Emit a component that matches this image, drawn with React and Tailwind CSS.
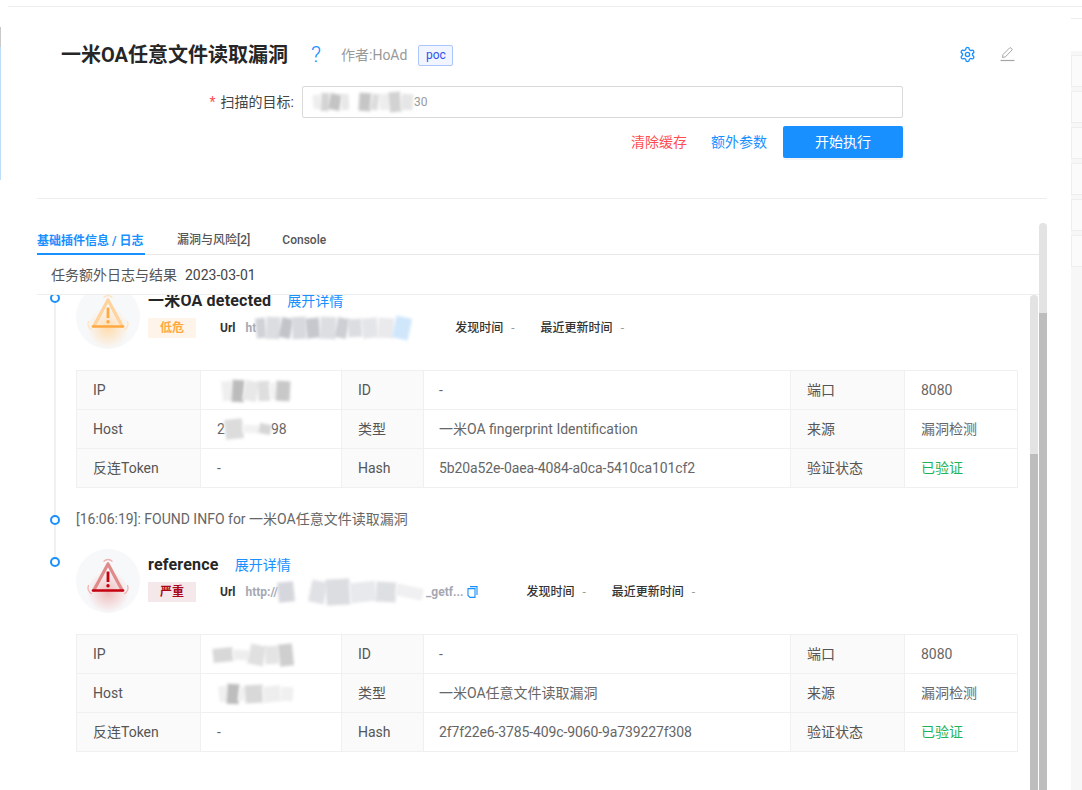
import React from "react";
import { Settings } from "lucide-react";

const riskStyles = {
  low: { main: "#ffa940", side: "#ffd39b", glow: "#ffdcae", arc: "#ffe2bf" },
  critical: { main: "#c4000f", side: "#e08a8a", glow: "#f0bcbc", arc: "#eeb0ac" },
};

const tilts = ["-rotate-6", "rotate-3", "rotate-12", "-rotate-3"];

function RiskIcon({ id, level }) {
  const c = riskStyles[level];
  return (
    <svg width="64" height="64" viewBox="0 0 64 64" className="shrink-0">
      <defs>
        <radialGradient id={id} cx="32" cy="43" r="21" gradientUnits="userSpaceOnUse">
          <stop offset="0" stopColor={c.glow} />
          <stop offset="1" stopColor={c.glow} stopOpacity="0" />
        </radialGradient>
      </defs>
      <circle cx="32" cy="32" r="32" fill="#f7f8fa" />
      <circle cx="32" cy="32" r="32" fill={`url(#${id})`} />
      <path d="M27.5 12.5 Q32 8.5 36.5 12.5" fill="none" stroke={c.arc} strokeWidth="1.2" />
      <path d="M12.5 36 Q10.5 42 16 45" fill="none" stroke={c.arc} strokeWidth="1.2" />
      <path d="M51.5 36 Q53.5 42 48 45" fill="none" stroke={c.arc} strokeWidth="1.2" />
      <path d="M32 15 L18 41 M32 15 L46 41" stroke={c.side} strokeWidth="3.2" strokeLinecap="round" />
      <path d="M17 41.5 H47" stroke={c.main} strokeWidth="2.6" strokeLinecap="round" />
      <path d="M32 22.5 V33" stroke={c.main} strokeWidth="2.8" />
      <circle cx="32" cy="36.8" r="1.7" fill={c.main} />
    </svg>
  );
}

function EditIcon() {
  return (
    <svg width="15" height="16" viewBox="0 0 15 16" fill="none" stroke="#a6a6a6" strokeWidth="1">
      <path d="M2.5 11.5 L3 8.5 L10 1.5 L12.5 3.5 L5.5 10.8 Z" />
      <path d="M0.5 14.5 H14.5" strokeWidth="1.2" />
    </svg>
  );
}

function CopyIcon() {
  return (
    <svg width="11" height="12" viewBox="0 0 11 12" fill="none" stroke="#1890ff" strokeWidth="1.1" className="shrink-0">
      <path d="M3 .6 H10 V9" />
      <path d="M1 2.6 H8 V11.4 H3 L1 9.4 Z" />
    </svg>
  );
}

// gray blobs standing in for the redacted parts of the screenshot
function Smudge({ blocks, className = "" }) {
  return (
    <span className={`inline-flex items-center align-middle ${className}`}>
      {blocks.map((b, i) => (
        <span key={i} className={`block shrink-0 blur-[1.5px] ${tilts[i % 4]} ${b}`} />
      ))}
    </span>
  );
}

function Scrollbar({ thumbClass, className = "" }) {
  return (
    <div className={`w-2 shrink-0 flex flex-col ${className}`}>
      <div className={`rounded-t bg-[#e3e3e3] ${thumbClass}`} />
      <div className="flex-1 bg-[#bdbdbd]" />
    </div>
  );
}

function Cell({ label, children, className = "" }) {
  const base = "border border-[#f0f0f0] px-4 h-[39px] text-sm leading-[22px]";
  if (label) return <td className={`${base} bg-[#fafafa] text-[#555] ${className}`}>{children}</td>;
  return <td className={`${base} text-[#666] ${className}`}>{children}</td>;
}

function InfoTable({ ip, host, type, hash }) {
  return (
    <table className="table-fixed border-collapse w-[941px]">
      <colgroup>
        <col className="w-[124px]" />
        <col className="w-[141px]" />
        <col className="w-[82px]" />
        <col className="w-[367px]" />
        <col className="w-[114px]" />
        <col className="w-[113px]" />
      </colgroup>
      <tbody>
        <tr>
          <Cell label>IP</Cell>
          <Cell>{ip}</Cell>
          <Cell label>ID</Cell>
          <Cell className="!pl-[15px]">-</Cell>
          <Cell label>端口</Cell>
          <Cell>8080</Cell>
        </tr>
        <tr>
          <Cell label>Host</Cell>
          <Cell>{host}</Cell>
          <Cell label>类型</Cell>
          <Cell className="!pl-[15px]">{type}</Cell>
          <Cell label>来源</Cell>
          <Cell>漏洞检测</Cell>
        </tr>
        <tr>
          <Cell label>反连Token</Cell>
          <Cell>-</Cell>
          <Cell label>Hash</Cell>
          <Cell className="!pl-[15px] tracking-[-0.12px]">{hash}</Cell>
          <Cell label>验证状态</Cell>
          <Cell className="!text-[#1db45a]">已验证</Cell>
        </tr>
      </tbody>
    </table>
  );
}

function TimelineItem({ children, className = "", last = false }) {
  return (
    <div className={`flex ${className}`}>
      <div className="w-[39px] shrink-0 flex flex-col items-start pl-[13px]">
        <div className="h-2 w-0.5 ml-1 bg-[#f0f0f0]" />
        <div className="w-2.5 h-2.5 rounded-full border-2 border-[#1890ff] bg-white shrink-0" />
        {!last && <div className="flex-1 w-0.5 ml-1 bg-[#f0f0f0]" />}
      </div>
      <div className="flex-1 min-w-0">{children}</div>
    </div>
  );
}

function TimeMeta({ label }) {
  return (
    <span className="flex items-center text-xs">
      <span className="font-medium text-[#333]">{label}</span>
      <span className="ml-2 text-[#999]">-</span>
    </span>
  );
}

function Finding({ id, level, title, tag, tagClass, url, metaClass, ip, host, type, hash }) {
  return (
    <div>
      <div className="flex h-[85px]">
        <RiskIcon id={id} level={level} />
        <div className="ml-2">
          <div className="flex items-center h-[30px] pt-0.5">
            <span className="text-base tracking-[0.2px] font-bold text-[#262626] leading-[22px]">{title}</span>
            <span className="ml-4 text-sm text-[#1890ff] leading-[22px]">展开详情</span>
          </div>
          <div className="flex items-center mt-[3px] h-5">
            <span className={`w-12 h-5 flex items-center justify-center text-xs font-bold ${tagClass}`}>{tag}</span>
            <span className="ml-6 text-xs font-bold text-[#333]">Url</span>
            <span className="ml-[10px] flex items-center text-xs font-bold text-[#a6a8b4] whitespace-nowrap">{url}</span>
            <div className={`flex items-center gap-[26px] ${metaClass}`}>
              <TimeMeta label="发现时间" />
              <TimeMeta label="最近更新时间" />
            </div>
          </div>
        </div>
      </div>
      <InfoTable ip={ip} host={host} type={type} hash={hash} />
    </div>
  );
}

export default function App() {
  return (
    <div className="w-[1082px] h-[790px] overflow-hidden bg-white flex flex-col font-['Roboto','Noto_Sans_CJK_SC',sans-serif] text-[#333]">
      {/* Top rule */}
      <div className="h-[7px] ml-2 border-b border-[#eeeeee] shrink-0" />

      <div className="flex flex-1 min-h-0">
        {/* Edge of the page behind the drawer */}
        <div className="w-px shrink-0 pt-5">
          <div className="h-5 bg-[#c9c9c9]" />
          <div className="h-[133px] bg-[#c0dff5]" />
        </div>

        <div className="w-[1070px] shrink-0 flex flex-col min-h-0">
          {/* Header */}
          <div className="flex items-center h-[30px] mt-[33px] pl-[60px] pr-[56px]">
            <h1 className="w-[228px] text-xl font-bold text-[#262626] whitespace-nowrap">一米OA任意文件读取漏洞</h1>
            <span className="ml-[22px] w-3 text-[22px] font-light leading-none text-[#1890ff]">?</span>
            <span className="ml-[18px] text-sm text-[#999]">作者:HoAd</span>
            <span className="ml-[11px] h-[21px] w-[35px] flex items-center justify-center rounded-[2px] border border-[#adc6ff] bg-[#f0f5ff] text-xs text-[#2f54eb]">poc</span>
            <div className="ml-auto -mt-0.5 flex items-center gap-6">
              <Settings size={17} strokeWidth={1.9} className="text-[#1890ff]" />
              <EditIcon />
            </div>
          </div>

          {/* Target form */}
          <div className="flex items-center mt-4 h-8">
            <label className="w-[293px] text-right text-sm text-[#444] whitespace-nowrap">
              <span className="text-[#ff4d4f] mr-[5px]">*</span>扫描的目标:
            </label>
            <div className="ml-2 w-[601px] h-8 flex items-center pl-[10px] rounded-[2px] border border-[#d9d9d9] text-xs text-[#999]">
              <Smudge
                blocks={[
                  "w-[8px] h-[14px] bg-[#eeeeee]",
                  "w-[8px] h-[18px] bg-[#d4d4d4]",
                  "w-[12px] h-[16px] bg-[#c4c4c4]",
                  "w-[8px] h-[16px] bg-[#e8e8e8]",
                  "w-[10px] h-[8px] bg-transparent",
                  "w-[12px] h-[18px] bg-[#c6c6c6]",
                  "w-[8px] h-[16px] bg-[#dddddd]",
                  "w-[10px] h-[16px] bg-[#eeeeee]",
                  "w-[12px] h-[20px] bg-[#d2d2d2]",
                  "w-[12px] h-[16px] bg-[#e6e6e6]",
                ]}
              />
              <span className="ml-px">30</span>
            </div>
          </div>

          {/* Actions */}
          <div className="flex items-center mt-2 h-8 w-[902px]">
            <div className="ml-auto flex items-center">
              <span className="text-sm text-[#ff4d4f]">清除缓存</span>
              <span className="ml-6 text-sm text-[#1890ff]">额外参数</span>
              <button className="ml-4 w-[120px] h-8 rounded-[2px] bg-[#1890ff] text-sm text-white shadow-[0_2px_0_rgba(0,0,0,0.045)]">开始执行</button>
            </div>
          </div>

          <div className="mt-10 ml-9 w-[1010px] border-b border-[#eeeeee]" />

          {/* Body */}
          <div className="flex flex-1 min-h-0 pl-9">
            <div className="w-[1002px] shrink-0 flex flex-col min-h-0">
              <div className="flex items-end h-[56px] border-b border-[#e8e8e8] text-xs">
                <div className="w-[108px] h-[32px] mb-[-1px] pt-[10px] border-b-2 border-[#1890ff] font-bold text-[#1890ff] whitespace-nowrap">基础插件信息 / 日志</div>
                <div className="h-[32px] ml-8 pt-[10px] font-medium text-[#555] whitespace-nowrap">漏洞与风险[2]</div>
                <div className="h-[32px] ml-8 pt-[10px] font-medium text-[#555]">Console</div>
              </div>

              <div className="h-10 shrink-0 flex items-center pl-[14px] pt-px border-b border-[#eeeeee] text-sm text-[#555]">
                任务额外日志与结果
                <span className="ml-2 text-[#444]">2023-03-01</span>
              </div>

              <div className="flex flex-1 min-h-0">
                <div className="w-[993px] shrink-0 overflow-hidden">
                  <div className="-mt-[10px]">
                    <TimelineItem className="h-[222px]">
                      <Finding
                        id="glow-low"
                        level="low"
                        title="一米OA detected"
                        tag="低危"
                        tagClass="bg-[#fff4ea] text-[#ffa940]"
                        metaClass="ml-[45px]"
                        url={
                          <>
                            <span>ht</span>
                            <Smudge
                              blocks={[
                                "w-[10px] h-[20px] bg-[#d0d2d8]",
                                "w-[14px] h-[22px] bg-[#dcdde1]",
                                "w-[12px] h-[20px] bg-[#c2c4ca]",
                                "w-[14px] h-[22px] bg-[#d8d9de]",
                                "w-[14px] h-[20px] bg-[#c6c8ce]",
                                "w-[16px] h-[22px] bg-[#dddee2]",
                                "w-[12px] h-[20px] bg-[#cdcfd4]",
                                "w-[14px] h-[18px] bg-[#dcdde1]",
                                "w-[16px] h-[20px] bg-[#e4e5e8]",
                                "w-[16px] h-[20px] bg-[#eaeaec]",
                                "w-[16px] h-[22px] bg-[#cfe6fb]",
                              ]}
                            />
                          </>
                        }
                        ip={
                          <Smudge
                            className="ml-[5px]"
                            blocks={[
                              "w-[10px] h-[20px] bg-[#efefef]",
                              "w-[12px] h-[22px] bg-[#bcbcbc]",
                              "w-[14px] h-[20px] bg-[#e8e8e8]",
                              "w-[12px] h-[20px] bg-[#dedede]",
                              "w-[6px] h-[16px] bg-[#f2f2f2]",
                              "w-[14px] h-[20px] bg-[#c8c8c8]",
                            ]}
                          />
                        }
                        host={
                          <span className="flex items-center">
                            2
                            <Smudge
                              blocks={[
                                "w-[18px] h-[20px] bg-[#dcdcdc]",
                                "w-[16px] h-[8px] bg-[#f2f2f2]",
                                "w-[12px] h-[10px] bg-[#d6d6d6]",
                              ]}
                            />
                            98
                          </span>
                        }
                        type="一米OA fingerprint Identification"
                        hash="5b20a52e-0aea-4084-a0ca-5410ca101cf2"
                      />
                    </TimelineItem>

                    <TimelineItem className="h-[42px]">
                      <div className="mt-px text-sm leading-[22px] text-[#666]">[16:06:19]: FOUND INFO for 一米OA任意文件读取漏洞</div>
                    </TimelineItem>

                    <TimelineItem last>
                      <Finding
                        id="glow-critical"
                        level="critical"
                        title="reference"
                        tag="严重"
                        tagClass="bg-[#f5e8ea] text-[#a8071a]"
                        metaClass="ml-[48px]"
                        url={
                          <>
                            <span>http://</span>
                            <Smudge
                              blocks={[
                                "w-[16px] h-[20px] bg-[#d6d7dc]",
                                "w-[16px] h-[6px] bg-transparent",
                                "w-[16px] h-[22px] bg-[#e0e1e5]",
                                "w-[24px] h-[26px] bg-[#dcdde1]",
                                "w-[26px] h-[20px] bg-[#e8e9ec]",
                                "w-[20px] h-[20px] bg-[#dedfe3]",
                                "w-[27px] h-[12px] bg-[#f0f0f2]",
                              ]}
                            />
                            <span className="ml-[3px]">_getf...</span>
                            <span className="ml-1"><CopyIcon /></span>
                          </>
                        }
                        ip={
                          <Smudge
                            className="-ml-1"
                            blocks={[
                              "w-[20px] h-[14px] bg-[#d8d8d8]",
                              "w-[16px] h-[10px] bg-[#eeeeee]",
                              "w-[16px] h-[20px] bg-[#e0e0e0]",
                              "w-[14px] h-[18px] bg-[#e4e4e4]",
                              "w-[14px] h-[22px] bg-[#cfcfcf]",
                            ]}
                          />
                        }
                        host={
                          <Smudge
                            className="ml-[2px]"
                            blocks={[
                              "w-[8px] h-[16px] bg-[#f0f0f0]",
                              "w-[12px] h-[20px] bg-[#bdbdbd]",
                              "w-[6px] h-[14px] bg-[#f0f0f0]",
                              "w-[18px] h-[18px] bg-[#d8d8d8]",
                              "w-[18px] h-[16px] bg-[#eeeeee]",
                              "w-[12px] h-[14px] bg-[#f0f0f0]",
                            ]}
                          />
                        }
                        type="一米OA任意文件读取漏洞"
                        hash="2f7f22e6-3785-409c-9060-9a739227f308"
                      />
                    </TimelineItem>
                  </div>
                </div>
                <Scrollbar thumbClass="h-[159px]" />
              </div>
            </div>
            <Scrollbar className="mt-[24px]" thumbClass="h-[90px]" />
          </div>
        </div>

        {/* Sliver of the list behind the drawer */}
        <div className="flex-1 pt-[11px]">
          <div className="h-px bg-[#eeeeee]" />
          <div className="mt-8 h-full bg-[#f7f7f7] pt-1 flex flex-col gap-1">
            <div className="h-8 shrink-0 bg-[#fbfbfb] border-y border-l border-[#eeeeee]" />
            <div className="h-8 shrink-0 bg-[#fbfbfb] border-y border-l border-[#eeeeee]" />
            <div className="h-8 shrink-0 bg-[#fbfbfb] border-y border-l border-[#eeeeee]" />
            <div className="h-8 shrink-0 bg-[#fbfbfb] border-y border-l border-[#eeeeee]" />
            <div className="h-8 shrink-0 bg-[#fbfbfb] border-y border-l border-[#eeeeee]" />
            <div className="h-8 shrink-0 bg-[#fbfbfb] border-y border-l border-[#eeeeee]" />
          </div>
        </div>
      </div>
    </div>
  );
}
